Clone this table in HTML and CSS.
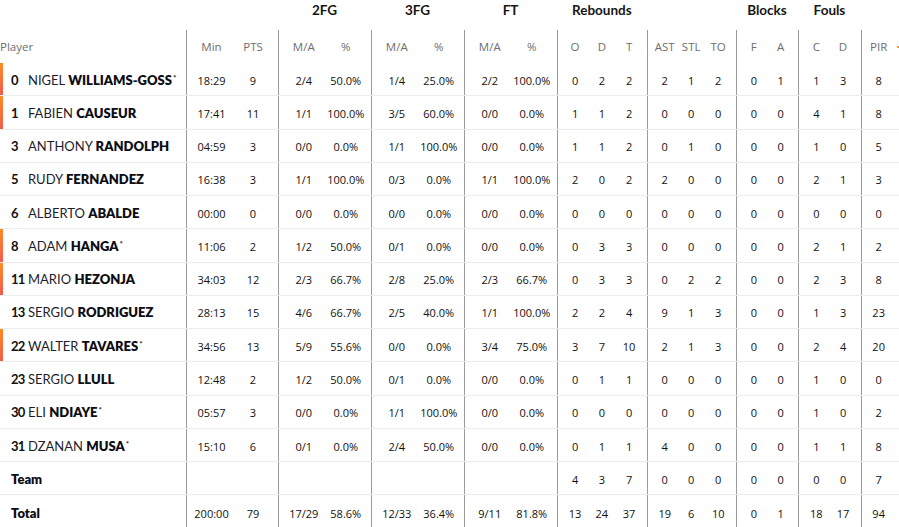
FILE: index.html
```html
<!DOCTYPE html>
<html lang="en">
<head>
<meta charset="utf-8">
<title>Box score</title>
<link rel="stylesheet" href="styles.css">
</head>
<body>
<div class="box">
  <div class="row groups">
    <div class="g-blank3"></div>
    <div class="g g2">2FG</div>
    <div class="g g2">3FG</div>
    <div class="g g2">FT</div>
    <div class="g g3">Rebounds</div>
    <div class="g-blank3b"></div>
    <div class="g g2">Blocks</div>
    <div class="g g2">Fouls</div>
    <div></div>
  </div>
  <div class="row head">
    <div class="player-h">Player</div>
    <div class="c s">Min</div><div class="c e">PTS</div>
    <div class="c s">M/A</div><div class="c e">%</div>
    <div class="c s">M/A</div><div class="c e">%</div>
    <div class="c s">M/A</div><div class="c e">%</div>
    <div class="c s">O</div><div class="c">D</div><div class="c e">T</div>
    <div class="c s">AST</div><div class="c">STL</div><div class="c e">TO</div>
    <div class="c s">F</div><div class="c e">A</div>
    <div class="c s">C</div><div class="c e">D</div>
    <div class="c s e">PIR<span class="sort"></span></div>
  </div>
  <div id="rows"></div>
</div>
<script src="app.js"></script>
</body>
</html>
```
FILE: app.js
```js
const data = [
  [true, "0", "NIGEL", "WILLIAMS-GOSS", true, "18:29","9","2/4","50.0%","1/4","25.0%","2/2","100.0%","0","2","2","2","1","2","0","1","1","3","8"],
  [true, "1", "FABIEN", "CAUSEUR", false, "17:41","11","1/1","100.0%","3/5","60.0%","0/0","0.0%","1","1","2","0","0","0","0","0","4","1","8"],
  [false, "3", "ANTHONY", "RANDOLPH", false, "04:59","3","0/0","0.0%","1/1","100.0%","0/0","0.0%","1","1","2","0","1","0","0","0","1","0","5"],
  [false, "5", "RUDY", "FERNANDEZ", false, "16:38","3","1/1","100.0%","0/3","0.0%","1/1","100.0%","2","0","2","2","0","0","0","0","2","1","3"],
  [false, "6", "ALBERTO", "ABALDE", false, "00:00","0","0/0","0.0%","0/0","0.0%","0/0","0.0%","0","0","0","0","0","0","0","0","0","0","0"],
  [true, "8", "ADAM", "HANGA", true, "11:06","2","1/2","50.0%","0/1","0.0%","0/0","0.0%","0","3","3","0","0","0","0","0","2","1","2"],
  [true, "11", "MARIO", "HEZONJA", false, "34:03","12","2/3","66.7%","2/8","25.0%","2/3","66.7%","0","3","3","0","2","2","0","0","2","3","8"],
  [false, "13", "SERGIO", "RODRIGUEZ", false, "28:13","15","4/6","66.7%","2/5","40.0%","1/1","100.0%","2","2","4","9","1","3","0","0","1","3","23"],
  [true, "22", "WALTER", "TAVARES", true, "34:56","13","5/9","55.6%","0/0","0.0%","3/4","75.0%","3","7","10","2","1","3","0","0","2","4","20"],
  [false, "23", "SERGIO", "LLULL", false, "12:48","2","1/2","50.0%","0/1","0.0%","0/0","0.0%","0","1","1","0","0","0","0","0","1","0","0"],
  [false, "30", "ELI", "NDIAYE", true, "05:57","3","0/0","0.0%","1/1","100.0%","0/0","0.0%","0","0","0","0","0","0","0","0","1","0","2"],
  [false, "31", "DZANAN", "MUSA", true, "15:10","6","0/1","0.0%","2/4","50.0%","0/0","0.0%","0","1","1","4","0","0","0","0","1","1","8"],
  [false, "", "Team", "", false, "","","","","","","","","4","3","7","0","0","0","0","0","0","0","7"],
  [false, "", "Total", "", false, "200:00","79","17/29","58.6%","12/33","36.4%","9/11","81.8%","13","24","37","19","6","10","0","1","18","17","94"]
];
// column classes: s = group start, e = group end
const cls = ["s","e","s","e","s","e","s","e","s","","e","s","","e","s","e","s","e","s e"];
const rows = document.getElementById("rows");
data.forEach(r => {
  const row = document.createElement("div");
  row.className = "row data";
  const p = document.createElement("div");
  p.className = "player";
  const bar = document.createElement("span");
  bar.className = r[0] ? "bar on" : "bar";
  p.appendChild(bar);
  if (r[1] === "") {
    const t = document.createElement("span");
    t.className = "label";
    t.textContent = r[2];
    p.appendChild(t);
  } else {
    const n = document.createElement("span");
    n.className = "num";
    n.textContent = r[1];
    p.appendChild(n);
    const nm = document.createElement("span");
    nm.className = "name";
    nm.innerHTML = r[2] + " <b>" + r[3] + "</b>" + (r[4] ? "<sup>*</sup>" : "");
    p.appendChild(nm);
  }
  row.appendChild(p);
  for (let i = 0; i < 19; i++) {
    const c = document.createElement("div");
    c.className = ("c v " + cls[i]).trim();
    c.textContent = r[5 + i];
    row.appendChild(c);
  }
  rows.appendChild(row);
});
```
FILE: styles.css
```css
* { box-sizing: border-box; }
html, body { margin: 0; padding: 0; background: #fff; }
body {
  font-family: "Open Sans", "Liberation Sans", sans-serif;
  color: #111;
  overflow: hidden;
}
.box { width: 899px; }
.row {
  display: grid;
  grid-template-columns: 186px 46px 46px 46.5px 46.5px 46.5px 46.5px 46.5px 46.5px 31.2px 27.3px 31.2px 31px 27px 31px 31.3px 31.3px 31.2px 31.2px 38px;
  align-items: stretch;
}
.groups { height: 30px; }
.g {
  font-family: "Lato", "Open Sans", sans-serif;
  font-weight: 700;
  font-size: 13.5px;
  color: #161616;
  text-align: center;
  line-height: 20px;
}
.g2 { grid-column: span 2; }
.g3 { grid-column: span 3; }
.g-blank3 { grid-column: span 3; }
.g-blank3b { grid-column: span 3; }

.head { height: 33px; }
.player-h {
  font-size: 11.5px;
  color: #6e6e6e;
  display: flex;
  align-items: center;
}
.head .c { color: #6e6e6e; font-size: 11.5px; }
.c {
  display: flex;
  align-items: center;
  justify-content: center;
  font-size: 11px;
  position: relative;
}
.c.s { border-left: 1px solid #9a9a9a; padding-left: 4px; }
.c.e { padding-right: 4px; }
.c.s.e { padding-left: 4px; padding-right: 7px; }

.sort {
  position: absolute;
  right: -2px;
  top: 50%;
  width: 4px;
  height: 2px;
  margin-top: -1px;
  background: #f7941d;
}

.data { height: 33.28px; border-bottom: 1px solid #ececec; }
.data:last-child { border-bottom: none; }
.v { color: #111; font-weight: 500; padding-top: 2px; }

.player {
  display: flex;
  align-items: center;
  font-family: "Lato", "Open Sans", sans-serif;
  font-size: 13px;
  color: #1d1d2b;
  padding-top: 1px;
}
.bar { align-self: stretch; width: 3px; margin-right: 8px; margin-top: -1px; }
.bar.on { background: linear-gradient(#ff8a24, #f25c4e); }
.num { width: 17px; flex: none; font-weight: 700; color: #111; font-size: 13px; letter-spacing: -0.8px; }
.name { white-space: nowrap; }
.name b { font-weight: 800; color: #0d0d14; }
.name sup { font-size: 8px; font-weight: 700; vertical-align: 4px; line-height: 0; margin-left: 1px; }
.label { font-weight: 800; color: #0d0d14; font-size: 13px; }
```
